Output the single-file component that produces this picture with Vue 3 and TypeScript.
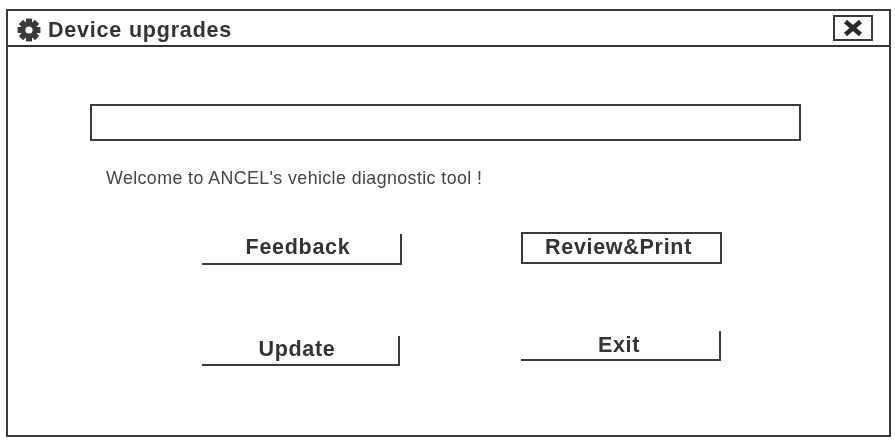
<script setup lang="ts">
const teeth: number[] = [0, 45, 90, 135];
const actions = [
  [
    { label: "Feedback", kind: "feedback" },
    { label: "Review&Print", kind: "review" },
  ],
  [
    { label: "Update", kind: "update" },
    { label: "Exit", kind: "exit" },
  ],
];
</script>

<template>
  <div class="page">
    <section class="window">
      <header class="titlebar">
        <svg class="gear" viewBox="0 0 24 24" aria-hidden="true">
          <rect
            v-for="angle in teeth"
            :key="angle"
            x="9"
            y="0.6"
            width="6"
            height="22.8"
            fill="#3a3a3a"
            :transform="`rotate(${angle} 12 12)`"
          />
          <circle cx="12" cy="12" r="8.2" fill="#3a3a3a" />
          <circle cx="12" cy="12" r="3.6" fill="#fff" />
        </svg>
        <h1 class="title">Device upgrades</h1>
        <button class="close" type="button" aria-label="Close">
          <svg viewBox="0 0 20 16" aria-hidden="true">
            <path d="M2.5 1.5 17.5 14.5M17.5 1.5 2.5 14.5" stroke="#2a2a2a" stroke-width="4.6" fill="none" />
          </svg>
        </button>
      </header>
      <div class="content">
        <div class="progress"></div>
        <p class="welcome">Welcome to ANCEL's vehicle diagnostic tool !</p>
        <div v-for="(row, index) in actions" :key="index" class="row">
          <button v-for="item in row" :key="item.kind" type="button" class="action" :class="item.kind">
            {{ item.label }}
          </button>
        </div>
      </div>
    </section>
  </div>
</template>

<style>
html,
body {
  margin: 0;
  background: #fff;
}
</style>

<style scoped>
.page {
  width: 895px;
  height: 440px;
  box-sizing: border-box;
  padding: 9px 4px 3px 6px;
  background: #fff;
  font-family: "Liberation Sans", Arial, sans-serif;
  color: #333;
  overflow: hidden;
}
.window {
  height: 100%;
  box-sizing: border-box;
  border: 2px solid #3a3a3a;
  filter: blur(0.55px);
  display: flex;
  flex-direction: column;
}
.titlebar {
  height: 36px;
  box-sizing: border-box;
  flex: none;
  display: flex;
  align-items: center;
  padding: 0 16px 0 9px;
  border-bottom: 2px solid #333;
}
.gear {
  width: 24px;
  height: 24px;
  flex: none;
  margin-top: 4px;
}
.title {
  margin: 4px 0 0 7px;
  font-size: 21.5px;
  font-weight: 700;
  letter-spacing: 0.8px;
  color: #333;
}
.close {
  margin-left: auto;
  width: 40px;
  height: 26px;
  box-sizing: border-box;
  padding: 0;
  background: #fff;
  border: 2px solid #3a3a3a;
  display: flex;
  align-items: center;
  justify-content: center;
}
.close svg {
  width: 20px;
  height: 16px;
}
.content {
  flex: 1;
  padding: 57px 0 0 82px;
}
.progress {
  width: 711px;
  height: 37px;
  box-sizing: border-box;
  border: 2px solid #3a3a3a;
}
.welcome {
  margin: 27px 0 0 16px;
  font-size: 17.8px;
  letter-spacing: 0.42px;
  line-height: 20px;
  color: #444;
}
.row {
  display: flex;
  align-items: flex-start;
  gap: 119px;
  margin-left: 112px;
  margin-top: 44px;
}
.row + .row {
  margin-top: 66px;
}
.action {
  width: 200px;
  height: 30px;
  box-sizing: border-box;
  padding: 0 6px 2px 0;
  margin: 0;
  background: #fff;
  border: 0;
  border-right: 2px solid #3a3a3a;
  border-bottom: 2px solid #3a3a3a;
  font-family: inherit;
  font-size: 21.5px;
  font-weight: 700;
  letter-spacing: 0.7px;
  color: #333;
}
.feedback {
  height: 31px;
  margin-top: 2px;
  padding-bottom: 3px;
}
.review {
  width: 201px;
  height: 32px;
  border: 2px solid #3a3a3a;
}
.update {
  width: 198px;
  margin-top: 5px;
}
.exit {
  margin-left: 2px;
  padding: 0 2px 0 0;
}
</style>
